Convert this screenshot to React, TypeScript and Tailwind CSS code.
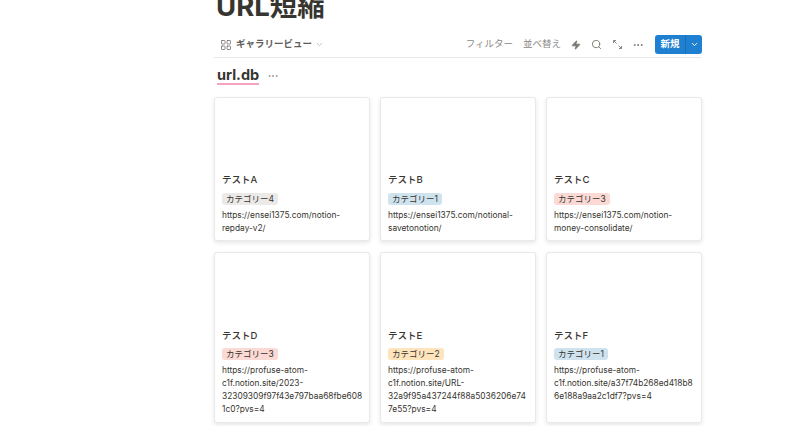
import { ChevronDown, Ellipsis, LayoutGrid, Search, Zap } from 'lucide-react'

type Card = {
  name: string
  tag: string
  tagClass: string
  url: string[]
}

const cards: Card[] = [
  { name: 'テストA', tag: 'カテゴリー4', tagClass: 'bg-[#ebeae8]', url: ['https://ensei1375.com/notion-', 'repday-v2/'] },
  { name: 'テストB', tag: 'カテゴリー1', tagClass: 'bg-[#cfe3ef]', url: ['https://ensei1375.com/notional-', 'savetonotion/'] },
  { name: 'テストC', tag: 'カテゴリー3', tagClass: 'bg-[#fbd9d4]', url: ['https://ensei1375.com/notion-', 'money-consolidate/'] },
  { name: 'テストD', tag: 'カテゴリー3', tagClass: 'bg-[#fbd9d4]', url: ['https://profuse-atom-', 'c1f.notion.site/2023-', '32309309f97f43e797baa68fbe608', '1c0?pvs=4'] },
  { name: 'テストE', tag: 'カテゴリー2', tagClass: 'bg-[#fde4bd]', url: ['https://profuse-atom-', 'c1f.notion.site/URL-', '32a9f95a437244f88a5036206e74', '7e55?pvs=4'] },
  { name: 'テストF', tag: 'カテゴリー1', tagClass: 'bg-[#cfe3ef]', url: ['https://profuse-atom-', 'c1f.notion.site/a37f74b268ed418b8', '6e188a9aa2c1df7?pvs=4'] },
]

function GalleryCard({ card, tall }: { card: Card; tall: boolean }) {
  return (
    <div className={`flex flex-col rounded-[3px] bg-white px-2 pt-[71px] shadow-[inset_0_0_0_1px_rgba(15,15,15,0.09),0_2px_4px_rgba(15,15,15,0.1)] ${tall ? 'h-[171px]' : 'h-[144px]'}`}>
      <div className={`text-[9.5px] leading-[24px] font-medium text-[#37352f] ${tall ? 'mt-[1px]' : ''}`}>{card.name}</div>
      <div className={`flex ${tall ? 'mt-0' : 'mt-[1px]'}`}>
        <span className={`rounded-[3px] px-[4px] text-[8.5px] leading-[12px] text-[#37352f] ${card.tagClass}`}>{card.tag}</span>
      </div>
      <div className="mt-[4px] text-[8.35px] leading-[13px] whitespace-nowrap text-[#37352f]">
        {card.url.map((line) => (
          <div key={line}>{line}</div>
        ))}
      </div>
    </div>
  )
}

export default function App() {
  return (
    <div className="h-[426px] w-[800px] overflow-hidden bg-white font-['Inter','Noto_Sans_CJK_JP',sans-serif] text-[#37352f]">
      <div className="ml-[214px] w-[488px]">
        <h1 className="-mt-[12px] ml-[2px] text-[27.5px] leading-[36px] font-bold text-[#37352f]">URL短縮</h1>

        <div className="mt-[8px] flex h-[26px] items-center border-b border-[#e9e9e7]">
          <LayoutGrid size={12} strokeWidth={1.5} className="ml-[6px] text-[#6b6a66]" />
          <span className="ml-[4px] text-[9.5px] font-semibold text-[#5f5e5a]">ギャラリービュー</span>
          <ChevronDown size={9} className="ml-[3px] text-[#b4b3b0]" />
          <div className="ml-auto flex items-center text-[9.5px] text-[#8a8984]">
            <span>フィルター</span>
            <span className="ml-[10px]">並べ替え</span>
            <Zap size={10} fill="currentColor" className="ml-[10px] text-[#77766f]" />
            <Search size={11} className="ml-[10px] text-[#77766f]" />
            <svg width="11" height="11" viewBox="0 0 11 11" className="ml-[10px] text-[#8a8984]" fill="none" stroke="currentColor" strokeWidth="1">
              <path d="M1.5 1.5 L4.5 4.5 M1.5 1.5 H4 M1.5 1.5 V4 M9.5 9.5 L6.5 6.5 M9.5 9.5 H7 M9.5 9.5 V7" />
            </svg>
            <Ellipsis size={12} className="ml-[9px] text-[#77766f]" />
            <div className="ml-[11px] flex h-[19px] w-[47px] items-center rounded-[3px] bg-[#1f7fd0] text-white">
              <span className="w-[30px] text-center text-[9.5px] font-semibold">新規</span>
              <div className="flex h-full flex-1 items-center justify-center border-l border-[#1a6db3]">
                <ChevronDown size={9} strokeWidth={2.5} />
              </div>
            </div>
          </div>
        </div>

        <div className="mt-[4px] flex h-[27px] items-center">
          <span className="ml-[3px] border-b-2 border-[#f5a3bd] text-[14.5px] leading-[17px] font-bold text-[#37352f]">url.db</span>
          <Ellipsis size={12} className="ml-[8px] text-[#9b9a97]" />
        </div>

        <div className="mt-[8px] grid grid-cols-3 gap-x-[10px] gap-y-[11px]">
          {cards.map((card, i) => (
            <GalleryCard key={card.name} card={card} tall={i >= 3} />
          ))}
        </div>
      </div>
    </div>
  )
}
